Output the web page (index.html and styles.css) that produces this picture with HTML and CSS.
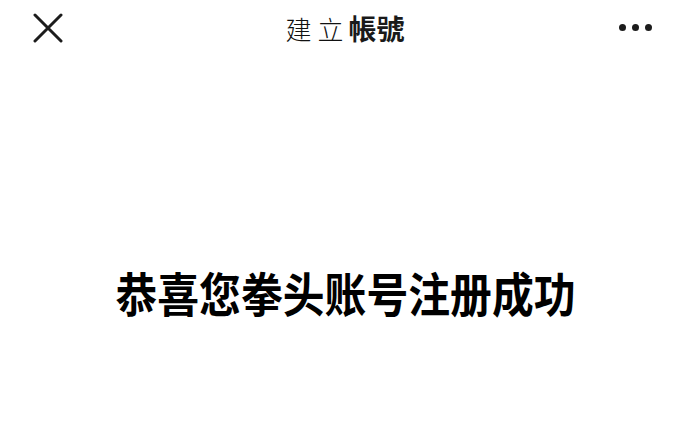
FILE: index.html
```html
<!DOCTYPE html>
<html lang="zh">
<head>
<meta charset="utf-8">
<title>建立帳號</title>
<link rel="stylesheet" href="styles.css">
</head>
<body>
<div class="page">
  <header class="topbar">
    <div class="left">
      <svg class="close" width="30" height="30" viewBox="0 0 30 30" aria-hidden="true">
        <path d="M2 2 L28 28 M28 2 L2 28" stroke="#1c1c1c" stroke-width="3" stroke-linecap="round" fill="none"/>
      </svg>
    </div>
    <h1 class="title"><span class="light">建立</span><span class="bold">帳號</span></h1>
    <div class="right">
      <span class="dot"></span><span class="dot"></span><span class="dot"></span>
    </div>
  </header>
  <main class="content">
    <p class="message">恭喜您拳头账号注册成功</p>
  </main>
</div>
</body>
</html>
```

FILE: styles.css
```css
html, body {
  margin: 0;
  padding: 0;
  background: #ffffff;
}
body {
  font-family: "Noto Sans CJK TC", "Noto Sans CJK SC", "Noto Sans", sans-serif;
  color: #111111;
}
.page {
  width: 690px;
  height: 426px;
  display: flex;
  flex-direction: column;
}
.topbar {
  height: 54px;
  display: grid;
  grid-template-columns: 1fr auto 1fr;
  align-items: center;
}
.left {
  padding-left: 33px;
  display: flex;
  align-items: center;
  padding-top: 1px;
}
.close {
  display: block;
}
.title {
  margin: 0;
  font-size: 28px;
  line-height: 1;
  font-weight: normal;
  display: flex;
  align-items: baseline;
  padding-top: 1px;
}
.light {
  font-family: "Noto Sans CJK TC", "Noto Sans CJK SC", serif;
  font-weight: 300;
  font-size: 26px;
  letter-spacing: 6px;
  color: #111111;
}
.bold {
  font-weight: 700;
  color: #1a1a1a;
  margin-left: -1px;
}
.right {
  justify-self: end;
  padding-right: 38px;
  display: flex;
  gap: 6px;
  align-items: center;
}
.dot {
  width: 7px;
  height: 7px;
  border-radius: 50%;
  background: #1c1c1c;
}
.content {
  flex: 1;
  display: flex;
  justify-content: center;
  padding-top: 214px;
}
.message {
  margin: 0;
  font-size: 47px;
  line-height: 47px;
  height: 47px;
  font-weight: 700;
  color: #000000;
  white-space: nowrap;
  transform: scaleX(0.89);
  transform-origin: center top;
}
```
